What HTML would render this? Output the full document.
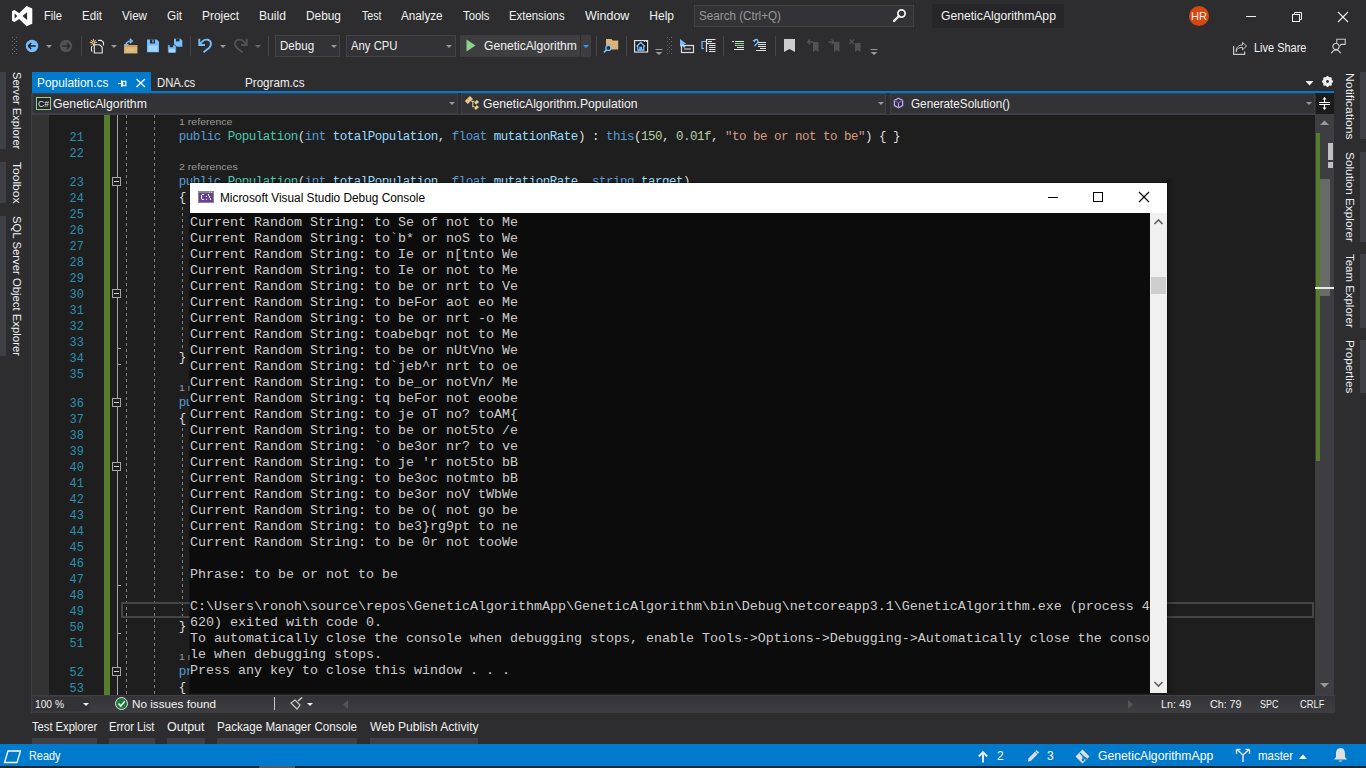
<!DOCTYPE html><html><head><meta charset="utf-8"><style>*{margin:0;padding:0}html,body{width:1366px;height:768px;overflow:hidden;background:#2d2d30}.a{position:absolute}.t{white-space:pre;font-family:'Liberation Sans',sans-serif}svg{display:block}</style></head><body><div class="a" style="left:0px;top:0px;width:1366px;height:768px;background:#2d2d30;"></div><svg class="a" style="left:12px;top:6px;" width="21" height="21" viewBox="0 0 21 21"><path fill="#ffffff" fill-rule="evenodd" d="M14.6,0 L20.3,2.5 L20.3,17.7 L14.6,20.2 L7.1,12.9 L2.6,16.1 L0,14.9 L0,5.1 L2.6,3.9 L7.1,7.2 Z M2.6,7.3 L2.6,12.7 L5.2,10 Z M15.1,6.3 L15.1,13.9 L10.4,10 Z"/></svg><div class="a t" style="left:44.00px;top:7.84px;font-size:12px;line-height:16px;color:#f1f1f1;transform:scaleX(0.9326);transform-origin:0.00px 0;">File</div><div class="a t" style="left:82.00px;top:7.84px;font-size:12px;line-height:16px;color:#f1f1f1;transform:scaleX(0.9662);transform-origin:0.00px 0;">Edit</div><div class="a t" style="left:122.00px;top:7.84px;font-size:12px;line-height:16px;color:#f1f1f1;transform:scaleX(0.9690);transform-origin:0.00px 0;">View</div><div class="a t" style="left:167.00px;top:7.84px;font-size:12px;line-height:16px;color:#f1f1f1;transform:scaleX(0.9804);transform-origin:0.00px 0;">Git</div><div class="a t" style="left:202.00px;top:7.84px;font-size:12px;line-height:16px;color:#f1f1f1;transform:scaleX(0.9920);transform-origin:0.00px 0;">Project</div><div class="a t" style="left:259.00px;top:7.84px;font-size:12px;line-height:16px;color:#f1f1f1;transform:scaleX(1.0112);transform-origin:0.00px 0;">Build</div><div class="a t" style="left:306.00px;top:7.84px;font-size:12px;line-height:16px;color:#f1f1f1;transform:scaleX(0.9887);transform-origin:0.00px 0;">Debug</div><div class="a t" style="left:361.50px;top:7.84px;font-size:12px;line-height:16px;color:#f1f1f1;transform:scaleX(0.8864);transform-origin:0.00px 0;">Test</div><div class="a t" style="left:401.00px;top:7.84px;font-size:12px;line-height:16px;color:#f1f1f1;transform:scaleX(0.9742);transform-origin:0.00px 0;">Analyze</div><div class="a t" style="left:462.50px;top:7.84px;font-size:12px;line-height:16px;color:#f1f1f1;transform:scaleX(0.9429);transform-origin:0.00px 0;">Tools</div><div class="a t" style="left:509.40px;top:7.84px;font-size:12px;line-height:16px;color:#f1f1f1;transform:scaleX(0.9472);transform-origin:0.00px 0;">Extensions</div><div class="a t" style="left:585.00px;top:7.84px;font-size:12px;line-height:16px;color:#f1f1f1;transform:scaleX(1.0398);transform-origin:0.00px 0;">Window</div><div class="a t" style="left:649.30px;top:7.84px;font-size:12px;line-height:16px;color:#f1f1f1;transform:scaleX(1.0000);transform-origin:0.00px 0;">Help</div><div class="a" style="left:694px;top:5px;width:220px;height:22px;background:#333337;box-sizing:border-box;border:1px solid #434346;"></div><div class="a t" style="left:699.00px;top:7.84px;font-size:12px;line-height:16px;color:#999999;transform:scaleX(0.9716);transform-origin:0.00px 0;">Search (Ctrl+Q)</div><svg class="a" style="left:892px;top:8px;" width="15" height="15" viewBox="0 0 15 15"><circle cx="9.5" cy="5.5" r="3.6" fill="none" stroke="#f1f1f1" stroke-width="1.8"/><path d="M7,8 L2,13" stroke="#f1f1f1" stroke-width="2.4" stroke-linecap="round"/></svg><div class="a" style="left:932px;top:4px;width:132px;height:24px;background:#262628;"></div><div class="a t" style="left:940.50px;top:7.84px;font-size:12px;line-height:16px;color:#f1f1f1;transform:scaleX(1.0132);transform-origin:0.00px 0;">GeneticAlgorithmApp</div><div class="a" style="left:1189px;top:6px;width:20px;height:20px;border-radius:50%;background:#d4470f;"></div><div class="a t" style="left:1191.00px;top:9.19px;font-size:11px;line-height:14px;color:#f8e8e0;transform:scaleX(1.0063);transform-origin:0.00px 0;">HR</div><div class="a" style="left:1246px;top:16px;width:10px;height:1px;background:#f1f1f1;"></div><svg class="a" style="left:1291px;top:11px;" width="12" height="12" viewBox="0 0 12 12"><rect x="1.5" y="3.5" width="7" height="7" fill="none" stroke="#f1f1f1" stroke-width="1"/><path d="M3.5,3.5 V1.5 H10.5 V8.5 H8.5" fill="none" stroke="#f1f1f1" stroke-width="1"/></svg><svg class="a" style="left:1337px;top:11px;" width="12" height="12" viewBox="0 0 12 12"><path d="M1,1 L11,11 M11,1 L1,11" stroke="#f1f1f1" stroke-width="1.1"/></svg><svg class="a" style="left:12px;top:37px;" width="5" height="17" viewBox="0 0 5 17"><g fill="#6a6a6a"><rect x="0" y="0" width="1" height="1"/><rect x="4" y="0" width="1" height="1"/><rect x="0" y="4" width="1" height="1"/><rect x="4" y="4" width="1" height="1"/><rect x="0" y="8" width="1" height="1"/><rect x="4" y="8" width="1" height="1"/><rect x="0" y="12" width="1" height="1"/><rect x="4" y="12" width="1" height="1"/><rect x="0" y="16" width="1" height="1"/><rect x="4" y="16" width="1" height="1"/><rect x="2" y="2" width="1" height="1"/><rect x="2" y="6" width="1" height="1"/><rect x="2" y="10" width="1" height="1"/><rect x="2" y="14" width="1" height="1"/></g></svg><svg class="a" style="left:667px;top:37px;" width="5" height="17" viewBox="0 0 5 17"><g fill="#6a6a6a"><rect x="0" y="0" width="1" height="1"/><rect x="4" y="0" width="1" height="1"/><rect x="0" y="4" width="1" height="1"/><rect x="4" y="4" width="1" height="1"/><rect x="0" y="8" width="1" height="1"/><rect x="4" y="8" width="1" height="1"/><rect x="0" y="12" width="1" height="1"/><rect x="4" y="12" width="1" height="1"/><rect x="0" y="16" width="1" height="1"/><rect x="4" y="16" width="1" height="1"/><rect x="2" y="2" width="1" height="1"/><rect x="2" y="6" width="1" height="1"/><rect x="2" y="10" width="1" height="1"/><rect x="2" y="14" width="1" height="1"/></g></svg><svg class="a" style="left:25px;top:39px;" width="14" height="14" viewBox="0 0 14 14"><circle cx="7" cy="7" r="6.2" fill="#75beff"/><path d="M3.2,7 H10.8 M3.2,7 L6.2,4 M3.2,7 L6.2,10" stroke="#1e1e1e" stroke-width="1.6" fill="none"/></svg><svg class="a" style="left:45px;top:44px;" width="8" height="5" viewBox="0 0 8 5"><path d="M1,1 L7,1 L4.0,4 Z" fill="#999999"/></svg><svg class="a" style="left:59px;top:39px;" width="14" height="14" viewBox="0 0 14 14"><circle cx="7" cy="7" r="6.2" fill="#525254"/><path d="M3.2,7 H10.8 M10.8,7 L7.8,4 M10.8,7 L7.8,10" stroke="#2d2d30" stroke-width="1.6" fill="none"/></svg><div class="a" style="left:81px;top:36px;width:1px;height:20px;background:#464649;"></div><div class="a" style="left:190px;top:36px;width:1px;height:20px;background:#464649;"></div><div class="a" style="left:268px;top:36px;width:1px;height:20px;background:#464649;"></div><div class="a" style="left:596px;top:36px;width:1px;height:20px;background:#464649;"></div><div class="a" style="left:626px;top:36px;width:1px;height:20px;background:#464649;"></div><div class="a" style="left:723px;top:36px;width:1px;height:20px;background:#464649;"></div><div class="a" style="left:775px;top:36px;width:1px;height:20px;background:#464649;"></div><svg class="a" style="left:89px;top:38px;" width="16" height="16" viewBox="0 0 16 16"><path d="M4.4,0.8 V8 M0.8,4.4 H8 M1.9,1.9 L6.9,6.9 M6.9,1.9 L1.9,6.9" stroke="#ffe08a" stroke-width="0.9"/><circle cx="4.4" cy="4.4" r="1.2" fill="#2d2d30" stroke="#ffe08a" stroke-width="0.8"/><path d="M9,2.4 H12.3 L14.5,4.6 V7.5" fill="none" stroke="#e8e8e8" stroke-width="1.1"/><path d="M5.3,6.8 H10.8 L13.2,9.2 V15 H5.3 Z" fill="#2d2d30" stroke="#e8e8e8" stroke-width="1.1"/><path d="M3.5,8.5 H2.5 V13.2 H3.5" fill="none" stroke="#e8e8e8" stroke-width="1"/></svg><svg class="a" style="left:110px;top:44px;" width="8" height="5" viewBox="0 0 8 5"><path d="M1,1 L7,1 L4.0,4 Z" fill="#999999"/></svg><svg class="a" style="left:123px;top:38px;" width="16" height="17" viewBox="0 0 16 17"><path d="M1,6 H5 L6,7 H14.5 V15.5 H1 Z" fill="#c9a15f"/><path d="M1.5,9 H14 V15 H1.5 Z" fill="#dcb67a"/><path d="M4,12 H12" stroke="#f0d49a" stroke-width="1" stroke-dasharray="1.2 0.8"/><path d="M2.8,8.5 C2.5,5 4.5,3 8,3" fill="none" stroke="#75beff" stroke-width="1.5"/><path d="M6.8,0.8 L9.2,3 L6.8,5.2" fill="none" stroke="#75beff" stroke-width="1.5"/></svg><svg class="a" style="left:146px;top:39px;" width="14" height="14" viewBox="0 0 14 14"><path d="M1,0.5 H10.8 L13,2.7 V13.3 H1 Z" fill="#75beff"/><rect x="4" y="0.5" width="5" height="4" fill="#2d2d30"/><rect x="6.3" y="1.2" width="1.4" height="2.2" fill="#75beff"/><rect x="2.5" y="6.5" width="9" height="6" fill="#a6d6ff"/></svg><svg class="a" style="left:167px;top:38px;" width="16" height="16" viewBox="0 0 16 16"><path d="M7,0.8 H13.5 L15.3,2.6 V8.8 H7 Z" fill="#75beff"/><rect x="9" y="0.8" width="3.5" height="2.6" fill="#2d2d30"/><path d="M0.7,6.6 H7.3 L9.3,8.6 V15 H0.7 Z" fill="#75beff" stroke="#2d2d30" stroke-width="0.9"/><rect x="2.7" y="6.6" width="3.5" height="2.6" fill="#2d2d30"/><rect x="2" y="11" width="6" height="3.5" fill="#a6d6ff"/></svg><svg class="a" style="left:198px;top:38px;" width="15" height="16" viewBox="0 0 15 16"><path d="M1.8,6.2 L4.5,3.3 C7,0.8 11.5,0.8 12.8,4.5 C13.5,6.8 12.5,8.5 11,10 L5.5,14.2" fill="none" stroke="#75beff" stroke-width="1.8"/><path d="M1.3,0.8 V7 H7" fill="none" stroke="#75beff" stroke-width="1.9"/></svg><svg class="a" style="left:219px;top:44px;" width="8" height="5" viewBox="0 0 8 5"><path d="M1,1 L7,1 L4.0,4 Z" fill="#999999"/></svg><svg class="a" style="left:233px;top:38px;" width="15" height="16" viewBox="0 0 15 16"><path d="M13.2,6.2 L10.5,3.3 C8,0.8 3.5,0.8 2.2,4.5 C1.5,6.8 2.5,8.5 4,10 L9.5,14.2" fill="none" stroke="#505356" stroke-width="1.8"/><path d="M13.7,0.8 V7 H8" fill="none" stroke="#505356" stroke-width="1.9"/></svg><svg class="a" style="left:254px;top:44px;" width="8" height="5" viewBox="0 0 8 5"><path d="M1,1 L7,1 L4.0,4 Z" fill="#6a6a6a"/></svg><div class="a" style="left:275px;top:35px;width:65px;height:22px;background:#333337;box-sizing:border-box;border:1px solid #434346;"></div><div class="a t" style="left:279.50px;top:37.84px;font-size:12px;line-height:16px;color:#f1f1f1;transform:scaleX(0.9661);transform-origin:0.00px 0;">Debug</div><svg class="a" style="left:330px;top:44px;" width="8" height="5" viewBox="0 0 8 5"><path d="M1,1 L7,1 L4.0,4 Z" fill="#999999"/></svg><div class="a" style="left:346px;top:35px;width:110px;height:22px;background:#333337;box-sizing:border-box;border:1px solid #434346;"></div><div class="a t" style="left:350.50px;top:37.84px;font-size:12px;line-height:16px;color:#f1f1f1;transform:scaleX(0.9432);transform-origin:0.00px 0;">Any CPU</div><svg class="a" style="left:445px;top:44px;" width="8" height="5" viewBox="0 0 8 5"><path d="M1,1 L7,1 L4.0,4 Z" fill="#999999"/></svg><div class="a" style="left:460px;top:35px;width:120px;height:22px;background:#3e3e40;"></div><div class="a" style="left:581px;top:35px;width:10px;height:22px;background:#3e3e40;"></div><svg class="a" style="left:466px;top:39px;" width="11" height="14" viewBox="0 0 11 14"><path d="M0.5,0.5 L9.5,6.5 L0.5,12.5 Z" fill="#8dd28a"/></svg><div class="a t" style="left:483.70px;top:37.84px;font-size:12px;line-height:16px;color:#f1f1f1;transform:scaleX(1.0098);transform-origin:0.00px 0;">GeneticAlgorithm</div><svg class="a" style="left:582px;top:44px;" width="8" height="5" viewBox="0 0 8 5"><path d="M1,1 L7,1 L4.0,4 Z" fill="#3399ff"/></svg><svg class="a" style="left:603px;top:38px;" width="17" height="17" viewBox="0 0 17 17"><path d="M3,1 H8.5 L9.5,2.5 H15.2 V11.4 H3 Z" fill="#dcb67a"/><path d="M10,1.6 H15" stroke="#2d2d30" stroke-width="0.8"/><g fill="#e89a5a"><rect x="7" y="5" width="1" height="1"/><rect x="9" y="6" width="1" height="1"/><rect x="11" y="5" width="1" height="1"/><rect x="13" y="7" width="1" height="1"/><rect x="10" y="9" width="1" height="1"/><rect x="12" y="9" width="1" height="1"/></g><circle cx="5.4" cy="9.9" r="2.5" fill="#2d2d30" stroke="#75beff" stroke-width="1.3"/><path d="M3.6,11.8 L1,14.4" stroke="#75beff" stroke-width="1.7"/></svg><svg class="a" style="left:633px;top:39px;" width="16" height="14" viewBox="0 0 16 14"><rect x="1.6" y="1.6" width="13" height="11.4" fill="#1e1e1e" stroke="#e0e0e0" stroke-width="1.2"/><path d="M3.5,7.5 L7.7,3.5 L12,7.5 M4.8,7 V11 H10.8 V7 M7,11 V8.5 H8.5 V11" fill="none" stroke="#75beff" stroke-width="1.3"/><rect x="11" y="2" width="1" height="1" fill="#e0e0e0"/><rect x="13" y="2" width="1" height="1" fill="#e0e0e0"/></svg><svg class="a" style="left:655px;top:48px;" width="8" height="8" viewBox="0 0 8 8"><rect x="0.5" y="1" width="7" height="1" fill="#999"/><path d="M0.5,4 H7.5 L4,7 Z" fill="#999"/></svg><svg class="a" style="left:870px;top:48px;" width="8" height="8" viewBox="0 0 8 8"><rect x="0.5" y="1" width="7" height="1" fill="#999"/><path d="M0.5,4 H7.5 L4,7 Z" fill="#999"/></svg><svg class="a" style="left:679px;top:38px;" width="16" height="16" viewBox="0 0 16 16"><path d="M1,1 L1,9 L3,7 L5,10 L6.5,9 L5,6 L7.5,6 Z" fill="#75beff"/><rect x="2.5" y="7.5" width="12" height="7" fill="none" stroke="#e0e0e0" stroke-width="1.2"/><path d="M5,11 H12" stroke="#e0e0e0" stroke-width="1"/></svg><svg class="a" style="left:700px;top:38px;" width="17" height="16" viewBox="0 0 17 16"><path d="M5,3.5 H2 V10.5 H4" fill="none" stroke="#75beff" stroke-width="1.2"/><path d="M4,3.5 H6" stroke="#75beff" stroke-width="1.2"/><path d="M6.5,1 V14" stroke="#e0e0e0" stroke-width="1.2"/><path d="M6.5,1.5 H15.5 M8,3.5 H12 M6.5,5.5 H15.5 M9,7.5 H15.5 M9,9.5 H15.5 M9,11.5 H15.5 M9,13.5 H15.5" stroke="#e0e0e0" stroke-width="1"/></svg><svg class="a" style="left:732px;top:39px;" width="13" height="13" viewBox="0 0 13 13"><path d="M0,2.5 H2 M3,2.5 H12 M3,4.5 H12 M3,6.5 H12 M5,8.5 H12 M2,10.5 H12" stroke="#e0e0e0" stroke-width="1"/><path d="M4,4.5 H12 M4,6.5 H12" stroke="#8dd28a" stroke-width="1.1"/></svg><svg class="a" style="left:752px;top:38px;" width="15" height="15" viewBox="0 0 15 15"><path d="M2,3 C3,1 6,1 6,3.5 C6,5 4.5,6 2.5,8" fill="none" stroke="#75beff" stroke-width="1.4"/><path d="M0.5,2 L2.5,4.5 L4,2" fill="#75beff"/><path d="M6,4.5 H14 M6,6.5 H14 M6,8.5 H14 M8,10.5 H14 M4,12.5 H14" stroke="#e0e0e0" stroke-width="1"/></svg><svg class="a" style="left:784px;top:39px;" width="12" height="14" viewBox="0 0 12 14"><path d="M0,0 H11 V13 L5.5,10 L0,13 Z" fill="#cccccc"/></svg><svg class="a" style="left:807px;top:39px;" width="13" height="14" viewBox="0 0 13 14"><path d="M6,3 H11.5 V13 L8.75,11 L6,13 Z" fill="#505356"/><path d="M0.5,3 H6 M0.5,3 L3,0.5 M0.5,3 L3,5.5" stroke="#505356" stroke-width="1.4" fill="none"/></svg><svg class="a" style="left:828px;top:39px;" width="13" height="14" viewBox="0 0 13 14"><path d="M6,3 H11.5 V13 L8.75,11 L6,13 Z" fill="#505356"/><path d="M0.5,3 H6 M6,3 L3.5,0.5 M6,3 L3.5,5.5" stroke="#505356" stroke-width="1.4" fill="none"/></svg><svg class="a" style="left:849px;top:39px;" width="13" height="14" viewBox="0 0 13 14"><path d="M6,4 H11.5 V13 L8.75,11 L6,13 Z" fill="#505356"/><path d="M0.5,0.5 L5,5 M5,0.5 L0.5,5" stroke="#505356" stroke-width="1.4" fill="none"/></svg><svg class="a" style="left:1232px;top:41px;" width="16" height="15" viewBox="0 0 16 15"><path d="M1.6,5 V13.4 H12.6 V10.5" fill="none" stroke="#c8c8c8" stroke-width="1.2"/><path d="M4.2,10.8 C4.6,7.6 7,6.4 10.5,6.4 V8.8 L14.6,5 L10.5,1.4 V3.9 C6.3,4 3.8,6.8 4.2,10.8 Z" fill="none" stroke="#c8c8c8" stroke-width="1"/></svg><div class="a t" style="left:1253.60px;top:39.84px;font-size:12px;line-height:16px;color:#f1f1f1;transform:scaleX(0.9129);transform-origin:0.00px 0;">Live Share</div><svg class="a" style="left:1330px;top:38px;" width="17" height="17" viewBox="0 0 17 17"><path d="M6.8,5 V1.2 H15.2 V6.4 H11.2 L9.6,8" fill="none" stroke="#c8c8c8" stroke-width="1.1"/><circle cx="6" cy="8.6" r="3.1" fill="#2d2d30" stroke="#c8c8c8" stroke-width="1.2"/><path d="M1.4,15.2 C2.5,12.8 4,12 6,12 C8,12 9.5,12.8 10.6,15.2" fill="none" stroke="#c8c8c8" stroke-width="1.2"/></svg><div class="a" style="left:0px;top:72px;width:6px;height:77px;background:#3f3f46;"></div><div class="a" style="left:0px;top:162px;width:6px;height:41px;background:#3f3f46;"></div><div class="a" style="left:0px;top:216px;width:6px;height:140px;background:#3f3f46;"></div><div class="a t" style="left:23.98px;top:72.00px;font-size:11.5px;line-height:15px;color:#f1f1f1;transform:rotate(90deg) scaleX(0.9675);transform-origin:0 0;">Server Explorer</div><div class="a t" style="left:23.98px;top:162.00px;font-size:11.5px;line-height:15px;color:#f1f1f1;transform:rotate(90deg) scaleX(1.0480);transform-origin:0 0;">Toolbox</div><div class="a t" style="left:23.98px;top:216.00px;font-size:11.5px;line-height:15px;color:#f1f1f1;transform:rotate(90deg) scaleX(0.9852);transform-origin:0 0;">SQL Server Object Explorer</div><div class="a" style="left:1360px;top:72px;width:6px;height:67px;background:#3f3f46;"></div><div class="a" style="left:1360px;top:152px;width:6px;height:90px;background:#3f3f46;"></div><div class="a" style="left:1360px;top:254px;width:6px;height:74px;background:#3f3f46;"></div><div class="a" style="left:1360px;top:340px;width:6px;height:53px;background:#3f3f46;"></div><div class="a t" style="left:1356.78px;top:73.00px;font-size:11.5px;line-height:15px;color:#f1f1f1;transform:rotate(90deg) scaleX(1.0639);transform-origin:0 0;">Notifications</div><div class="a t" style="left:1356.78px;top:152.00px;font-size:11.5px;line-height:15px;color:#f1f1f1;transform:rotate(90deg) scaleX(1.0274);transform-origin:0 0;">Solution Explorer</div><div class="a t" style="left:1356.78px;top:254.00px;font-size:11.5px;line-height:15px;color:#f1f1f1;transform:rotate(90deg) scaleX(0.9946);transform-origin:0 0;">Team Explorer</div><div class="a t" style="left:1356.78px;top:340.00px;font-size:11.5px;line-height:15px;color:#f1f1f1;transform:rotate(90deg) scaleX(1.0153);transform-origin:0 0;">Properties</div><div class="a" style="left:32px;top:72px;width:119px;height:21px;background:#007acc;"></div><div class="a t" style="left:36.70px;top:74.84px;font-size:12px;line-height:16px;color:#ffffff;transform:scaleX(0.9903);transform-origin:0.00px 0;">Population.cs</div><svg class="a" style="left:117px;top:79px;" width="11" height="10" viewBox="0 0 11 10"><path d="M1,4.5 H4.5" stroke="#ffffff" stroke-width="1"/><path d="M4.6,1 V8" stroke="#ffffff" stroke-width="1.1"/><rect x="5.6" y="2.4" width="3.2" height="4.2" fill="none" stroke="#ffffff" stroke-width="1.2"/></svg><svg class="a" style="left:135px;top:78px;" width="12" height="10" viewBox="0 0 12 10"><path d="M1.5,1 L10,9 M10,1 L1.5,9" stroke="#ffffff" stroke-width="1.3"/></svg><div class="a t" style="left:156.70px;top:74.84px;font-size:12px;line-height:16px;color:#f1f1f1;transform:scaleX(0.9410);transform-origin:0.00px 0;">DNA.cs</div><div class="a t" style="left:244.50px;top:74.84px;font-size:12px;line-height:16px;color:#f1f1f1;transform:scaleX(0.9691);transform-origin:0.00px 0;">Program.cs</div><div class="a" style="left:32px;top:91px;width:1302px;height:2px;background:#007acc;"></div><svg class="a" style="left:1304px;top:80px;" width="11" height="7" viewBox="0 0 11 7"><path d="M1.5,1 H9.5 L5.5,5.5 Z" fill="#f1f1f1"/></svg><svg class="a" style="left:1321px;top:75px;" width="13" height="13" viewBox="0 0 13 13"><g transform="translate(6.5,6.5)"><circle r="3.6" fill="none" stroke="#f1f1f1" stroke-width="2.2"/><path d="M0,-5.5 V5.5 M-5.5,0 H5.5 M-3.9,-3.9 L3.9,3.9 M3.9,-3.9 L-3.9,3.9" stroke="#f1f1f1" stroke-width="1.8"/><circle r="1.4" fill="#2d2d30"/></g></svg><div class="a" style="left:31px;top:93px;width:1px;height:620px;background:#3f3f46;"></div><div class="a" style="left:32px;top:93px;width:426px;height:21px;background:#333337;box-sizing:border-box;border:1px solid #3f3f46;"></div><div class="a" style="left:461px;top:93px;width:425px;height:21px;background:#333337;box-sizing:border-box;border:1px solid #3f3f46;"></div><div class="a" style="left:890px;top:93px;width:425px;height:21px;background:#333337;box-sizing:border-box;border:1px solid #3f3f46;"></div><svg class="a" style="left:36px;top:97px;" width="15" height="13" viewBox="0 0 15 13"><rect x="0.5" y="0.5" width="14" height="12" fill="#252526" stroke="#8fd18f" stroke-width="1"/><text x="2" y="9.5" font-family="Liberation Sans" font-size="8.5" fill="#e0e0e0">C#</text></svg><div class="a t" style="left:53.20px;top:95.84px;font-size:12px;line-height:16px;color:#f1f1f1;transform:scaleX(1.0196);transform-origin:0.00px 0;">GeneticAlgorithm</div><svg class="a" style="left:448px;top:101px;" width="8" height="5" viewBox="0 0 8 5"><path d="M1,1 L7,1 L4.0,4 Z" fill="#999999"/></svg><svg class="a" style="left:464px;top:96px;" width="16" height="16" viewBox="0 0 16 16"><path d="M6,0 L9,2.9 L3.8,7.9 L0.8,4.9 Z M12.9,3.9 L15.1,6.1 L12.1,8.7 L10.1,6.6 Z M12.7,9.2 L15.1,11 L11.9,13.9 L10.1,12.1 Z" fill="#e2cf8f"/><path d="M7.2,5.3 H10.5 M8.8,5.3 V10.7 H10.8" fill="none" stroke="#e2cf8f" stroke-width="1.1"/><circle cx="4.2" cy="3.4" r="0.6" fill="#f0a050"/><circle cx="6.2" cy="3.4" r="0.6" fill="#f0a050"/><circle cx="3.5" cy="5.3" r="0.6" fill="#f0a050"/><circle cx="5.4" cy="5.3" r="0.6" fill="#f0a050"/></svg><div class="a t" style="left:482.50px;top:95.84px;font-size:12px;line-height:16px;color:#f1f1f1;transform:scaleX(1.0158);transform-origin:0.00px 0;">GeneticAlgorithm.Population</div><svg class="a" style="left:877px;top:101px;" width="8" height="5" viewBox="0 0 8 5"><path d="M1,1 L7,1 L4.0,4 Z" fill="#999999"/></svg><svg class="a" style="left:893px;top:97px;" width="11" height="12" viewBox="0 0 11 12"><path d="M5.5,1.2 L9.6,3.4 V8.6 L5.5,10.8 L1.4,8.6 V3.4 Z" fill="none" stroke="#b4b0f0" stroke-width="1.3"/><path d="M1.4,3.4 L5.5,5.8 L9.6,3.4 M5.5,5.8 V10.8" fill="none" stroke="#8a4cc8" stroke-width="1.1"/><path d="M5.5,6.5 V10.5" stroke="#b4b0f0" stroke-width="1"/></svg><div class="a t" style="left:911.00px;top:95.84px;font-size:12px;line-height:16px;color:#f1f1f1;transform:scaleX(0.9763);transform-origin:0.00px 0;">GenerateSolution()</div><svg class="a" style="left:1305px;top:101px;" width="8" height="5" viewBox="0 0 8 5"><path d="M1,1 L7,1 L4.0,4 Z" fill="#999999"/></svg><div class="a" style="left:1316px;top:93px;width:18px;height:21px;background:#1b1b1c;"></div><svg class="a" style="left:1316px;top:94px;" width="18" height="20" viewBox="0 0 18 20"><path d="M3,8.5 H14 M3,10.5 H14" stroke="#ffffff" stroke-width="1.1"/><path d="M8.5,3.5 V8 M8.5,11 V15.5" stroke="#ffffff" stroke-width="1.1"/><path d="M6.5,5.5 L8.5,3 L10.5,5.5 Z M6.5,13.5 L8.5,16 L10.5,13.5 Z" fill="#ffffff"/></svg><div class="a" style="left:32px;top:114px;width:1283px;height:581px;background:#1e1e1e;"></div><div class="a" style="left:32px;top:114px;width:1283px;height:1px;background:#3f3f46;"></div><div class="a" style="left:32px;top:115px;width:17px;height:580px;background:#333333;"></div><div class="a" style="left:1315px;top:114px;width:19px;height:581px;background:#3e3e42;"></div><svg class="a" style="left:1319px;top:119px;" width="11" height="7" viewBox="0 0 11 7"><path d="M1,6 H10 L5.5,1.5 Z" fill="#999999"/></svg><svg class="a" style="left:1319px;top:682px;" width="11" height="7" viewBox="0 0 11 7"><path d="M1,1 H10 L5.5,5.5 Z" fill="#999999"/></svg><div class="a" style="left:1316px;top:133px;width:4px;height:328px;background:#587c2e;"></div><div class="a" style="left:1320px;top:179px;width:10px;height:117px;background:#686a68;"></div><div class="a" style="left:1328px;top:143px;width:5px;height:17px;background:#c0c0c0;"></div><div class="a" style="left:1328px;top:162px;width:5px;height:6px;background:#c0c0c0;"></div><div class="a" style="left:1315px;top:287px;width:19px;height:2px;background:#e8e8e8;"></div><div class="a" style="left:104px;top:115px;width:6px;height:580px;background:#587c2e;"></div><div class="a" style="left:117px;top:115px;width:1px;height:580px;background:#a5a5a5;"></div><div class="a" style="left:126px;top:115px;width:1px;height:580px;background:repeating-linear-gradient(to bottom,#808080 0,#808080 3px,transparent 3px,transparent 6px);"></div><div class="a" style="left:154px;top:115px;width:1px;height:580px;background:repeating-linear-gradient(to bottom,#808080 0,#808080 3px,transparent 3px,transparent 6px);"></div><div class="a" style="left:182px;top:207px;width:1px;height:142px;background:repeating-linear-gradient(to bottom,#808080 0,#808080 3px,transparent 3px,transparent 6px);"></div><div class="a" style="left:182px;top:428px;width:1px;height:190px;background:repeating-linear-gradient(to bottom,#808080 0,#808080 3px,transparent 3px,transparent 6px);"></div><div class="a" style="left:121px;top:602px;width:1193px;height:16px;box-sizing:border-box;border:2px solid #464646;"></div><div class="a" style="left:112px;top:177px;width:9px;height:9px;box-sizing:border-box;border:1px solid #a5a5a5;background:#1e1e1e;"></div><div class="a" style="left:114px;top:181px;width:5px;height:1px;background:#d0d0d0;"></div><div class="a" style="left:112px;top:289px;width:9px;height:9px;box-sizing:border-box;border:1px solid #a5a5a5;background:#1e1e1e;"></div><div class="a" style="left:114px;top:293px;width:5px;height:1px;background:#d0d0d0;"></div><div class="a" style="left:112px;top:398px;width:9px;height:9px;box-sizing:border-box;border:1px solid #a5a5a5;background:#1e1e1e;"></div><div class="a" style="left:114px;top:402px;width:5px;height:1px;background:#d0d0d0;"></div><div class="a" style="left:112px;top:462px;width:9px;height:9px;box-sizing:border-box;border:1px solid #a5a5a5;background:#1e1e1e;"></div><div class="a" style="left:114px;top:466px;width:5px;height:1px;background:#d0d0d0;"></div><div class="a" style="left:112px;top:667px;width:9px;height:9px;box-sizing:border-box;border:1px solid #a5a5a5;background:#1e1e1e;"></div><div class="a" style="left:114px;top:671px;width:5px;height:1px;background:#d0d0d0;"></div><div class="a" style="left:117px;top:348px;width:4px;height:1px;background:#a5a5a5;"></div><div class="a" style="left:117px;top:364px;width:4px;height:1px;background:#a5a5a5;"></div><div class="a" style="left:117px;top:585px;width:4px;height:1px;background:#a5a5a5;"></div><div class="a" style="left:117px;top:633px;width:4px;height:1px;background:#a5a5a5;"></div><div class="a t" style="left:69.60px;top:130.20px;font-family:'Liberation Mono',monospace;font-size:11.9px;letter-spacing:-0.1px;line-height:16px;color:#2b91af">21</div><div class="a t" style="left:69.60px;top:146.20px;font-family:'Liberation Mono',monospace;font-size:11.9px;letter-spacing:-0.1px;line-height:16px;color:#2b91af">22</div><div class="a t" style="left:69.60px;top:175.20px;font-family:'Liberation Mono',monospace;font-size:11.9px;letter-spacing:-0.1px;line-height:16px;color:#2b91af">23</div><div class="a t" style="left:69.60px;top:191.20px;font-family:'Liberation Mono',monospace;font-size:11.9px;letter-spacing:-0.1px;line-height:16px;color:#2b91af">24</div><div class="a t" style="left:69.60px;top:207.20px;font-family:'Liberation Mono',monospace;font-size:11.9px;letter-spacing:-0.1px;line-height:16px;color:#2b91af">25</div><div class="a t" style="left:69.60px;top:223.20px;font-family:'Liberation Mono',monospace;font-size:11.9px;letter-spacing:-0.1px;line-height:16px;color:#2b91af">26</div><div class="a t" style="left:69.60px;top:239.20px;font-family:'Liberation Mono',monospace;font-size:11.9px;letter-spacing:-0.1px;line-height:16px;color:#2b91af">27</div><div class="a t" style="left:69.60px;top:255.20px;font-family:'Liberation Mono',monospace;font-size:11.9px;letter-spacing:-0.1px;line-height:16px;color:#2b91af">28</div><div class="a t" style="left:69.60px;top:271.20px;font-family:'Liberation Mono',monospace;font-size:11.9px;letter-spacing:-0.1px;line-height:16px;color:#2b91af">29</div><div class="a t" style="left:69.60px;top:287.20px;font-family:'Liberation Mono',monospace;font-size:11.9px;letter-spacing:-0.1px;line-height:16px;color:#2b91af">30</div><div class="a t" style="left:69.60px;top:303.20px;font-family:'Liberation Mono',monospace;font-size:11.9px;letter-spacing:-0.1px;line-height:16px;color:#2b91af">31</div><div class="a t" style="left:69.60px;top:319.20px;font-family:'Liberation Mono',monospace;font-size:11.9px;letter-spacing:-0.1px;line-height:16px;color:#2b91af">32</div><div class="a t" style="left:69.60px;top:335.20px;font-family:'Liberation Mono',monospace;font-size:11.9px;letter-spacing:-0.1px;line-height:16px;color:#2b91af">33</div><div class="a t" style="left:69.60px;top:351.20px;font-family:'Liberation Mono',monospace;font-size:11.9px;letter-spacing:-0.1px;line-height:16px;color:#2b91af">34</div><div class="a t" style="left:69.60px;top:367.20px;font-family:'Liberation Mono',monospace;font-size:11.9px;letter-spacing:-0.1px;line-height:16px;color:#2b91af">35</div><div class="a t" style="left:69.60px;top:396.20px;font-family:'Liberation Mono',monospace;font-size:11.9px;letter-spacing:-0.1px;line-height:16px;color:#2b91af">36</div><div class="a t" style="left:69.60px;top:412.20px;font-family:'Liberation Mono',monospace;font-size:11.9px;letter-spacing:-0.1px;line-height:16px;color:#2b91af">37</div><div class="a t" style="left:69.60px;top:428.20px;font-family:'Liberation Mono',monospace;font-size:11.9px;letter-spacing:-0.1px;line-height:16px;color:#2b91af">38</div><div class="a t" style="left:69.60px;top:444.20px;font-family:'Liberation Mono',monospace;font-size:11.9px;letter-spacing:-0.1px;line-height:16px;color:#2b91af">39</div><div class="a t" style="left:69.60px;top:460.20px;font-family:'Liberation Mono',monospace;font-size:11.9px;letter-spacing:-0.1px;line-height:16px;color:#2b91af">40</div><div class="a t" style="left:69.60px;top:476.20px;font-family:'Liberation Mono',monospace;font-size:11.9px;letter-spacing:-0.1px;line-height:16px;color:#2b91af">41</div><div class="a t" style="left:69.60px;top:492.20px;font-family:'Liberation Mono',monospace;font-size:11.9px;letter-spacing:-0.1px;line-height:16px;color:#2b91af">42</div><div class="a t" style="left:69.60px;top:508.20px;font-family:'Liberation Mono',monospace;font-size:11.9px;letter-spacing:-0.1px;line-height:16px;color:#2b91af">43</div><div class="a t" style="left:69.60px;top:524.20px;font-family:'Liberation Mono',monospace;font-size:11.9px;letter-spacing:-0.1px;line-height:16px;color:#2b91af">44</div><div class="a t" style="left:69.60px;top:540.20px;font-family:'Liberation Mono',monospace;font-size:11.9px;letter-spacing:-0.1px;line-height:16px;color:#2b91af">45</div><div class="a t" style="left:69.60px;top:556.20px;font-family:'Liberation Mono',monospace;font-size:11.9px;letter-spacing:-0.1px;line-height:16px;color:#2b91af">46</div><div class="a t" style="left:69.60px;top:572.20px;font-family:'Liberation Mono',monospace;font-size:11.9px;letter-spacing:-0.1px;line-height:16px;color:#2b91af">47</div><div class="a t" style="left:69.60px;top:588.20px;font-family:'Liberation Mono',monospace;font-size:11.9px;letter-spacing:-0.1px;line-height:16px;color:#2b91af">48</div><div class="a t" style="left:69.60px;top:604.20px;font-family:'Liberation Mono',monospace;font-size:11.9px;letter-spacing:-0.1px;line-height:16px;color:#2b91af">49</div><div class="a t" style="left:69.60px;top:620.20px;font-family:'Liberation Mono',monospace;font-size:11.9px;letter-spacing:-0.1px;line-height:16px;color:#2b91af">50</div><div class="a t" style="left:69.60px;top:636.20px;font-family:'Liberation Mono',monospace;font-size:11.9px;letter-spacing:-0.1px;line-height:16px;color:#2b91af">51</div><div class="a t" style="left:69.60px;top:665.20px;font-family:'Liberation Mono',monospace;font-size:11.9px;letter-spacing:-0.1px;line-height:16px;color:#2b91af">52</div><div class="a t" style="left:69.60px;top:681.20px;font-family:'Liberation Mono',monospace;font-size:11.9px;letter-spacing:-0.1px;line-height:16px;color:#2b91af">53</div><div class="a t" style="left:179.30px;top:115.71px;font-size:9.5px;line-height:12px;color:#999999;transform:scaleX(1.1123);transform-origin:0.00px 0;">1 reference</div><div class="a t" style="left:179.30px;top:160.71px;font-size:9.5px;line-height:12px;color:#999999;transform:scaleX(1.1117);transform-origin:0.00px 0;">2 references</div><div class="a t" style="left:179.30px;top:381.71px;font-size:9.5px;line-height:12px;color:#999999;transform:scaleX(1.1123);transform-origin:0.00px 0;">1 reference</div><div class="a t" style="left:179.30px;top:650.71px;font-size:9.5px;line-height:12px;color:#999999;transform:scaleX(1.1123);transform-origin:0.00px 0;">1 reference</div><div class="a t" style="left:178.70px;top:129.07px;font-family:'Liberation Mono',monospace;font-size:12.5px;letter-spacing:-0.500px;line-height:16px"><span style="color:#569cd6">public</span><span style="color:#dcdcdc"> </span><span style="color:#4ec9b0">Population</span><span style="color:#dcdcdc">(</span><span style="color:#569cd6">int</span><span style="color:#dcdcdc"> </span><span style="color:#9cdcfe">totalPopulation</span><span style="color:#dcdcdc">, </span><span style="color:#569cd6">float</span><span style="color:#dcdcdc"> </span><span style="color:#9cdcfe">mutationRate</span><span style="color:#dcdcdc">) : </span><span style="color:#569cd6">this</span><span style="color:#dcdcdc">(</span><span style="color:#b5cea8">150</span><span style="color:#dcdcdc">, </span><span style="color:#b5cea8">0.01f</span><span style="color:#dcdcdc">, </span><span style="color:#d69d85">&quot;to be or not to be&quot;</span><span style="color:#dcdcdc">) { }</span></div><div class="a t" style="left:178.70px;top:174.07px;font-family:'Liberation Mono',monospace;font-size:12.5px;letter-spacing:-0.500px;line-height:16px"><span style="color:#569cd6">public</span><span style="color:#dcdcdc"> </span><span style="color:#4ec9b0">Population</span><span style="color:#dcdcdc">(</span><span style="color:#569cd6">int</span><span style="color:#dcdcdc"> </span><span style="color:#9cdcfe">totalPopulation</span><span style="color:#dcdcdc">, </span><span style="color:#569cd6">float</span><span style="color:#dcdcdc"> </span><span style="color:#9cdcfe">mutationRate</span><span style="color:#dcdcdc">, </span><span style="color:#569cd6">string</span><span style="color:#dcdcdc"> </span><span style="color:#9cdcfe">target</span><span style="color:#dcdcdc">)</span></div><div class="a t" style="left:178.70px;top:190.07px;font-family:'Liberation Mono',monospace;font-size:12.5px;letter-spacing:-0.500px;line-height:16px"><span style="color:#dcdcdc">{</span></div><div class="a t" style="left:178.70px;top:350.07px;font-family:'Liberation Mono',monospace;font-size:12.5px;letter-spacing:-0.500px;line-height:16px"><span style="color:#dcdcdc">}</span></div><div class="a t" style="left:178.70px;top:395.07px;font-family:'Liberation Mono',monospace;font-size:12.5px;letter-spacing:-0.500px;line-height:16px"><span style="color:#569cd6">public</span></div><div class="a t" style="left:178.70px;top:411.07px;font-family:'Liberation Mono',monospace;font-size:12.5px;letter-spacing:-0.500px;line-height:16px"><span style="color:#dcdcdc">{</span></div><div class="a t" style="left:178.70px;top:619.07px;font-family:'Liberation Mono',monospace;font-size:12.5px;letter-spacing:-0.500px;line-height:16px"><span style="color:#dcdcdc">}</span></div><div class="a t" style="left:178.70px;top:664.07px;font-family:'Liberation Mono',monospace;font-size:12.5px;letter-spacing:-0.500px;line-height:16px"><span style="color:#569cd6">private</span></div><div class="a t" style="left:178.70px;top:680.07px;font-family:'Liberation Mono',monospace;font-size:12.5px;letter-spacing:-0.500px;line-height:16px"><span style="color:#dcdcdc">{</span></div><div class="a" style="left:32px;top:695px;width:1303px;height:18px;background:linear-gradient(to bottom,#333337,#38383c 40%,#3e3e42);"></div><div class="a" style="left:32px;top:695px;width:1303px;height:1px;background:#3f3f46;"></div><div class="a" style="left:32px;top:696px;width:59px;height:16px;background:#333337;box-sizing:border-box;border:1px solid #3a3a3e;"></div><div class="a t" style="left:35.00px;top:697.49px;font-size:11px;line-height:14px;color:#f1f1f1;transform:scaleX(0.9295);transform-origin:0.00px 0;">100 %</div><svg class="a" style="left:82px;top:702px;" width="8" height="5" viewBox="0 0 8 5"><path d="M1,1 L7,1 L4.0,4 Z" fill="#f1f1f1"/></svg><svg class="a" style="left:115px;top:697px;" width="14" height="14" viewBox="0 0 14 14"><circle cx="6.5" cy="6.5" r="6" fill="#1e7a3c" stroke="#e0e0e0" stroke-width="1"/><path d="M3.5,6.5 L5.8,9 L9.8,4.3" fill="none" stroke="#ffffff" stroke-width="1.5"/></svg><div class="a t" style="left:132.00px;top:696.82px;font-size:11.5px;line-height:15px;color:#f1f1f1;transform:scaleX(1.0182);transform-origin:0.00px 0;">No issues found</div><div class="a" style="left:274px;top:697px;width:1px;height:13px;background:#c8c8c8;"></div><svg class="a" style="left:289px;top:697px;" width="15" height="14" viewBox="0 0 15 14"><path d="M6,3 L11,8 L8,12 L2,6 Z" fill="none" stroke="#c8c8c8" stroke-width="1.2"/><path d="M9,4 L13,0.5" stroke="#c8c8c8" stroke-width="1.5"/></svg><svg class="a" style="left:306px;top:702px;" width="8" height="5" viewBox="0 0 8 5"><path d="M1,1 L7,1 L4.0,4 Z" fill="#f1f1f1"/></svg><svg class="a" style="left:342px;top:699px;" width="7" height="11" viewBox="0 0 7 11"><path d="M6,1 V10 L1,5.5 Z" fill="#555558"/></svg><svg class="a" style="left:1127px;top:699px;" width="7" height="11" viewBox="0 0 7 11"><path d="M1,1 V10 L6,5.5 Z" fill="#555558"/></svg><div class="a t" style="left:1161.00px;top:697.49px;font-size:11px;line-height:14px;color:#f1f1f1;transform:scaleX(0.9804);transform-origin:0.00px 0;">Ln: 49</div><div class="a t" style="left:1209.50px;top:697.49px;font-size:11px;line-height:14px;color:#f1f1f1;transform:scaleX(0.9722);transform-origin:0.00px 0;">Ch: 79</div><div class="a t" style="left:1260.30px;top:697.49px;font-size:11px;line-height:14px;color:#f1f1f1;transform:scaleX(0.8097);transform-origin:0.00px 0;">SPC</div><div class="a t" style="left:1299.50px;top:697.49px;font-size:11px;line-height:14px;color:#f1f1f1;transform:scaleX(0.8502);transform-origin:0.00px 0;">CRLF</div><div class="a t" style="left:31.70px;top:719.34px;font-size:12px;line-height:16px;color:#f1f1f1;transform:scaleX(0.9314);transform-origin:0.00px 0;">Test Explorer</div><div class="a" style="left:32px;top:738px;width:65px;height:6px;background:#3f3f46;"></div><div class="a t" style="left:109.30px;top:719.34px;font-size:12px;line-height:16px;color:#f1f1f1;transform:scaleX(0.9343);transform-origin:0.00px 0;">Error List</div><div class="a" style="left:109px;top:738px;width:46px;height:6px;background:#3f3f46;"></div><div class="a t" style="left:167.20px;top:719.34px;font-size:12px;line-height:16px;color:#f1f1f1;transform:scaleX(1.0417);transform-origin:0.00px 0;">Output</div><div class="a" style="left:167px;top:738px;width:38px;height:6px;background:#3f3f46;"></div><div class="a t" style="left:217.00px;top:719.34px;font-size:12px;line-height:16px;color:#f1f1f1;transform:scaleX(0.9669);transform-origin:0.00px 0;">Package Manager Console</div><div class="a" style="left:217px;top:738px;width:140px;height:6px;background:#3f3f46;"></div><div class="a t" style="left:369.50px;top:719.34px;font-size:12px;line-height:16px;color:#f1f1f1;transform:scaleX(1.0065);transform-origin:0.00px 0;">Web Publish Activity</div><div class="a" style="left:370px;top:738px;width:108px;height:6px;background:#3f3f46;"></div><div class="a" style="left:0px;top:744px;width:1366px;height:22px;background:#007acc;"></div><svg class="a" style="left:3px;top:750px;" width="19" height="14" viewBox="0 0 19 14"><path d="M5,1 H17.5 L14,12.5 H1.5 Z" fill="none" stroke="#ffffff" stroke-width="1.3"/></svg><div class="a t" style="left:28.50px;top:747.84px;font-size:12px;line-height:16px;color:#ffffff;transform:scaleX(0.9078);transform-origin:0.00px 0;">Ready</div><svg class="a" style="left:977px;top:750px;" width="12" height="13" viewBox="0 0 12 13"><path d="M6,12.5 V2.5 M1.8,6.5 L6,2.2 L10.2,6.5" fill="none" stroke="#e8e8e8" stroke-width="2"/></svg><div class="a t" style="left:997.00px;top:747.84px;font-size:12px;line-height:16px;color:#ffffff;">2</div><svg class="a" style="left:1027px;top:749px;" width="13" height="14" viewBox="0 0 13 14"><path d="M9.6,1 L12.2,3.6 L4,11.8 L0.8,12.8 L1.6,9.2 Z" fill="#dcdcdc"/><path d="M8.2,2.5 L10.8,5.1" stroke="#007acc" stroke-width="0.9"/></svg><div class="a t" style="left:1047.00px;top:747.84px;font-size:12px;line-height:16px;color:#ffffff;">3</div><svg class="a" style="left:1075px;top:749px;" width="16" height="15" viewBox="0 0 16 15"><path d="M7.5,0.5 L14.5,7.5 L7.5,14.5 L0.5,7.5 Z" fill="#e0e0e0"/><path d="M5,4 L8,7 V11 M8,7 L10.5,9.5" stroke="#007acc" stroke-width="1.2" fill="none"/><circle cx="8" cy="11" r="1.3" fill="#007acc"/><circle cx="10.5" cy="9.5" r="1.3" fill="#007acc"/></svg><div class="a t" style="left:1097.70px;top:747.84px;font-size:12px;line-height:16px;color:#ffffff;transform:scaleX(1.0159);transform-origin:0.00px 0;">GeneticAlgorithmApp</div><svg class="a" style="left:1235px;top:748px;" width="16" height="15" viewBox="0 0 16 15"><path d="M8,14 V7 L2,1.5 M8,7 L14,1.5" fill="none" stroke="#e8e0dc" stroke-width="1.5"/><path d="M1.5,1.5 H5.5 M1.5,1.5 V5.8 M14.5,1.5 H10.5 M14.5,1.5 V5.8" stroke="#e8e0dc" stroke-width="1.4"/></svg><div class="a t" style="left:1257.50px;top:747.84px;font-size:12px;line-height:16px;color:#ffffff;transform:scaleX(0.9564);transform-origin:0.00px 0;">master</div><svg class="a" style="left:1298px;top:753px;" width="10" height="7" viewBox="0 0 10 7"><path d="M1,6 H9 L5,1.5 Z" fill="#ffffff"/></svg><svg class="a" style="left:1333px;top:747px;" width="15" height="16" viewBox="0 0 15 16"><path d="M7.5,1 C11,1 12,4 12,7 V10 L14,12.5 H1 L3,10 V7 C3,4 4,1 7.5,1 Z" fill="#e0e0e0"/><path d="M5.5,13.5 C5.5,15 9.5,15 9.5,13.5 Z" fill="#e0e0e0"/></svg><div class="a" style="left:0px;top:766px;width:1366px;height:2px;background:#1f262d;"></div><div class="a" style="left:259px;top:766px;width:36px;height:2px;background:#5a5a5e;"></div><div class="a" style="left:1167px;top:178px;width:9px;height:515px;background:linear-gradient(to right,rgba(0,0,0,0.22),rgba(0,0,0,0));border-top-right-radius:9px"></div><div class="a" style="left:189px;top:182px;width:979px;height:512px;background:rgba(0,0,0,0.3);"></div><div class="a" style="left:190px;top:183px;width:977px;height:30px;background:#ffffff;"></div><svg class="a" style="left:198px;top:191px;" width="16" height="12" viewBox="0 0 16 12"><rect x="0" y="0" width="16" height="12" fill="#858b7e"/><rect x="1" y="2" width="14" height="9" fill="#6b3fa0"/><rect x="11" y="0.8" width="1" height="1" fill="#e0e0e0"/><rect x="13" y="0.8" width="1" height="1" fill="#e0e0e0"/><g fill="#ffffff"><rect x="3" y="4" width="1" height="4"/><rect x="4" y="3" width="2" height="1"/><rect x="4" y="8" width="2" height="1"/><rect x="8" y="5" width="1" height="1"/><rect x="8" y="8" width="1" height="1"/><rect x="10" y="3" width="1" height="2"/><rect x="11" y="5" width="1" height="2"/><rect x="12" y="7" width="1" height="2"/></g></svg><div class="a t" style="left:219.90px;top:189.84px;font-size:12px;line-height:16px;color:#000000;transform:scaleX(0.9865);transform-origin:0.00px 0;">Microsoft Visual Studio Debug Console</div><div class="a" style="left:1048px;top:197px;width:10px;height:1px;background:#000000;"></div><svg class="a" style="left:1092px;top:191px;" width="12" height="12" viewBox="0 0 12 12"><rect x="1.5" y="1.5" width="9" height="9" fill="none" stroke="#000" stroke-width="1"/></svg><svg class="a" style="left:1138px;top:191px;" width="12" height="12" viewBox="0 0 12 12"><path d="M1,1 L11,11 M11,1 L1,11" stroke="#000" stroke-width="1.1"/></svg><div class="a" style="left:190px;top:213px;width:960px;height:480px;background:#0c0c0c;"></div><div class="a" style="left:1150px;top:213px;width:17px;height:480px;background:#f0f0f0;"></div><svg class="a" style="left:1153px;top:218px;" width="11" height="8" viewBox="0 0 11 8"><path d="M1.5,6 L5.5,2 L9.5,6" fill="none" stroke="#606060" stroke-width="1.6"/></svg><svg class="a" style="left:1153px;top:680px;" width="11" height="8" viewBox="0 0 11 8"><path d="M1.5,2 L5.5,6 L9.5,2" fill="none" stroke="#606060" stroke-width="1.6"/></svg><div class="a" style="left:1151px;top:277px;width:15px;height:17px;background:#cdcdcd;"></div><div class="a t" style="left:190.00px;top:215.45px;font-family:'Liberation Mono',monospace;font-size:13.33px;line-height:16px;color:#cccccc">Current Random String: to Se of not to Me</div><div class="a t" style="left:190.00px;top:231.45px;font-family:'Liberation Mono',monospace;font-size:13.33px;line-height:16px;color:#cccccc">Current Random String: to`b* or noS to We</div><div class="a t" style="left:190.00px;top:247.45px;font-family:'Liberation Mono',monospace;font-size:13.33px;line-height:16px;color:#cccccc">Current Random String: to Ie or n[tnto We</div><div class="a t" style="left:190.00px;top:263.45px;font-family:'Liberation Mono',monospace;font-size:13.33px;line-height:16px;color:#cccccc">Current Random String: to Ie or not to Me</div><div class="a t" style="left:190.00px;top:279.45px;font-family:'Liberation Mono',monospace;font-size:13.33px;line-height:16px;color:#cccccc">Current Random String: to be or nrt to Ve</div><div class="a t" style="left:190.00px;top:295.45px;font-family:'Liberation Mono',monospace;font-size:13.33px;line-height:16px;color:#cccccc">Current Random String: to beFor aot eo Me</div><div class="a t" style="left:190.00px;top:311.45px;font-family:'Liberation Mono',monospace;font-size:13.33px;line-height:16px;color:#cccccc">Current Random String: to be or nrt -o Me</div><div class="a t" style="left:190.00px;top:327.45px;font-family:'Liberation Mono',monospace;font-size:13.33px;line-height:16px;color:#cccccc">Current Random String: toabebqr not to Me</div><div class="a t" style="left:190.00px;top:343.45px;font-family:'Liberation Mono',monospace;font-size:13.33px;line-height:16px;color:#cccccc">Current Random String: to be or nUtVno We</div><div class="a t" style="left:190.00px;top:359.45px;font-family:'Liberation Mono',monospace;font-size:13.33px;line-height:16px;color:#cccccc">Current Random String: td`jeb^r nrt to oe</div><div class="a t" style="left:190.00px;top:375.45px;font-family:'Liberation Mono',monospace;font-size:13.33px;line-height:16px;color:#cccccc">Current Random String: to be_or notVn/ Me</div><div class="a t" style="left:190.00px;top:391.45px;font-family:'Liberation Mono',monospace;font-size:13.33px;line-height:16px;color:#cccccc">Current Random String: tq beFor not eoobe</div><div class="a t" style="left:190.00px;top:407.45px;font-family:'Liberation Mono',monospace;font-size:13.33px;line-height:16px;color:#cccccc">Current Random String: to je oT no? toAM{</div><div class="a t" style="left:190.00px;top:423.45px;font-family:'Liberation Mono',monospace;font-size:13.33px;line-height:16px;color:#cccccc">Current Random String: to be or not5to /e</div><div class="a t" style="left:190.00px;top:439.45px;font-family:'Liberation Mono',monospace;font-size:13.33px;line-height:16px;color:#cccccc">Current Random String: `o be3or nr? to ve</div><div class="a t" style="left:190.00px;top:455.45px;font-family:'Liberation Mono',monospace;font-size:13.33px;line-height:16px;color:#cccccc">Current Random String: to je &#x27;r not5to bB</div><div class="a t" style="left:190.00px;top:471.45px;font-family:'Liberation Mono',monospace;font-size:13.33px;line-height:16px;color:#cccccc">Current Random String: to be3oc notmto bB</div><div class="a t" style="left:190.00px;top:487.45px;font-family:'Liberation Mono',monospace;font-size:13.33px;line-height:16px;color:#cccccc">Current Random String: to be3or noV tWbWe</div><div class="a t" style="left:190.00px;top:503.45px;font-family:'Liberation Mono',monospace;font-size:13.33px;line-height:16px;color:#cccccc">Current Random String: to be o( not go be</div><div class="a t" style="left:190.00px;top:519.45px;font-family:'Liberation Mono',monospace;font-size:13.33px;line-height:16px;color:#cccccc">Current Random String: to be3}rg9pt to ne</div><div class="a t" style="left:190.00px;top:535.45px;font-family:'Liberation Mono',monospace;font-size:13.33px;line-height:16px;color:#cccccc">Current Random String: to be 0r not tooWe</div><div class="a t" style="left:190.00px;top:567.45px;font-family:'Liberation Mono',monospace;font-size:13.33px;line-height:16px;color:#cccccc">Phrase: to be or not to be</div><div class="a t" style="left:190.00px;top:599.45px;font-family:'Liberation Mono',monospace;font-size:13.33px;line-height:16px;color:#cccccc">C:\Users\ronoh\source\repos\GeneticAlgorithmApp\GeneticAlgorithm\bin\Debug\netcoreapp3.1\GeneticAlgorithm.exe (process 4</div><div class="a t" style="left:190.00px;top:615.45px;font-family:'Liberation Mono',monospace;font-size:13.33px;line-height:16px;color:#cccccc">620) exited with code 0.</div><div class="a t" style="left:190.00px;top:631.45px;font-family:'Liberation Mono',monospace;font-size:13.33px;line-height:16px;color:#cccccc">To automatically close the console when debugging stops, enable Tools-&gt;Options-&gt;Debugging-&gt;Automatically close the conso</div><div class="a t" style="left:190.00px;top:647.45px;font-family:'Liberation Mono',monospace;font-size:13.33px;line-height:16px;color:#cccccc">le when debugging stops.</div><div class="a t" style="left:190.00px;top:663.45px;font-family:'Liberation Mono',monospace;font-size:13.33px;line-height:16px;color:#cccccc">Press any key to close this window . . .</div></body></html>
